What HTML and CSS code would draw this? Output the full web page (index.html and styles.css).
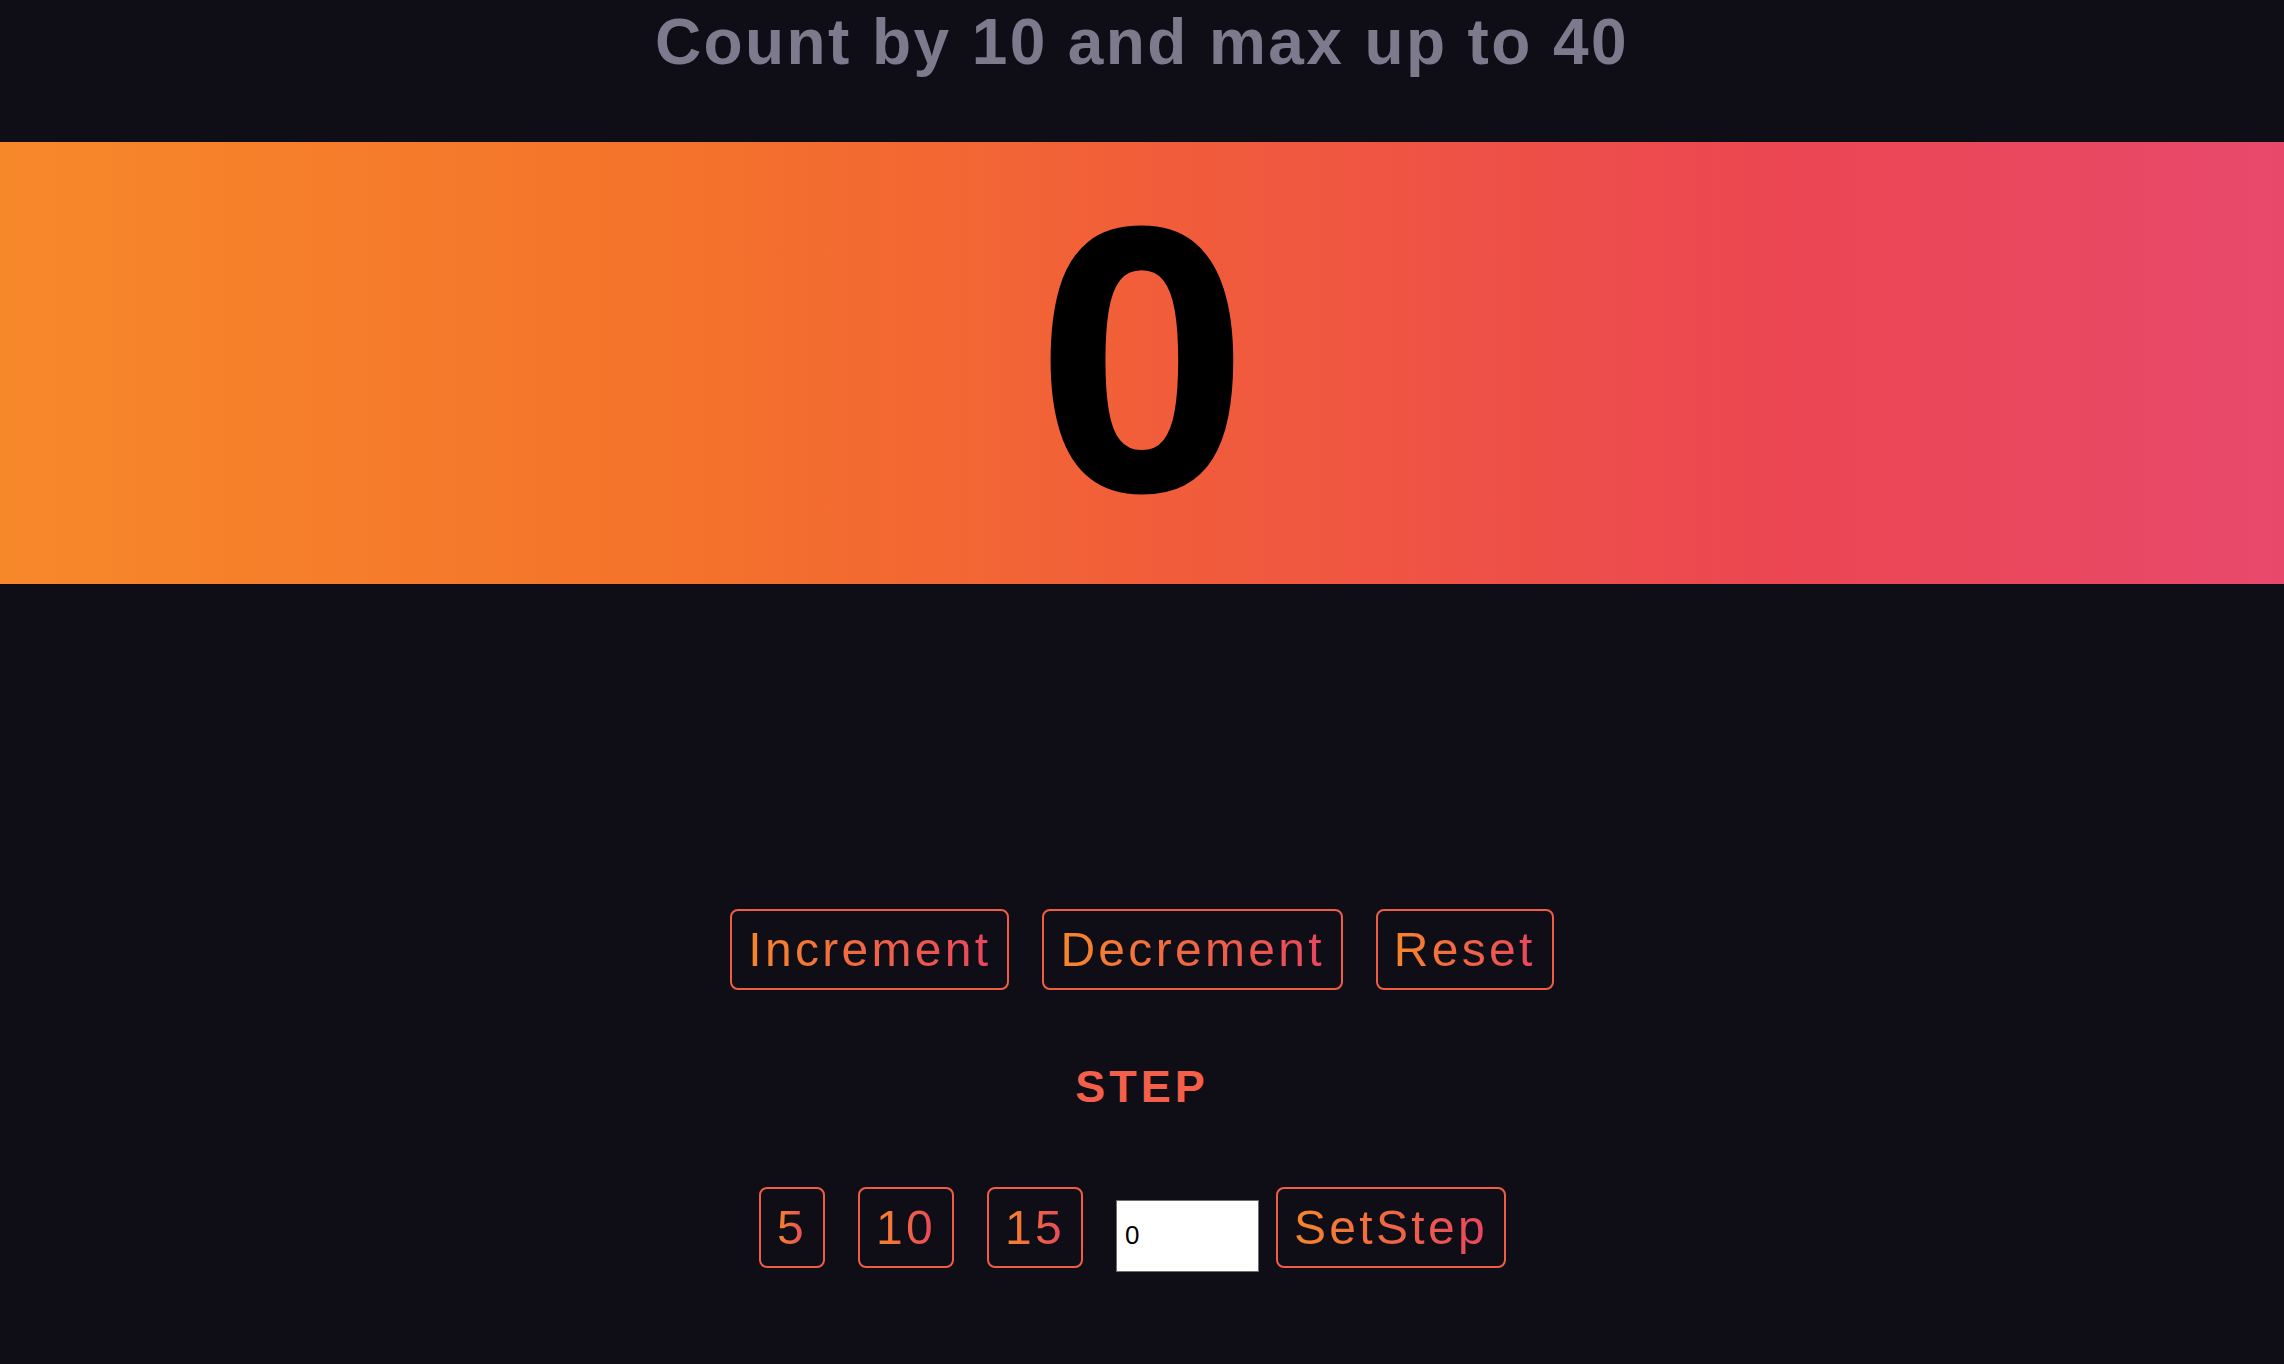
FILE: index.html
```html
<!DOCTYPE html>
<html lang="en">
<head>
<meta charset="utf-8">
<title>Counter</title>
<link rel="stylesheet" href="styles.css">
</head>
<body>
<main class="app">
  <h1 class="title">Count by 10 and max up to 40</h1>
  <section class="display">
    <span class="count">0</span>
  </section>
  <div class="controls">
    <button class="btn"><span class="grad">Increment</span></button>
    <button class="btn"><span class="grad">Decrement</span></button>
    <button class="btn"><span class="grad">Reset</span></button>
  </div>
  <h2 class="step-label">STEP</h2>
  <div class="step-row">
    <button class="btn"><span class="grad">5</span></button>
    <button class="btn"><span class="grad">10</span></button>
    <button class="btn"><span class="grad">15</span></button>
    <input class="step-input" type="text" value="0">
    <button class="btn btn-set"><span class="grad">SetStep</span></button>
  </div>
</main>
</body>
</html>
```
FILE: styles.css
```css
html, body {
  margin: 0;
  padding: 0;
  background: #0f0e17;
}

body {
  font-family: "Liberation Sans", Arial, sans-serif;
}

.app {
  display: flex;
  flex-direction: column;
  align-items: center;
  padding-top: 5px;
}

.title {
  margin: 0;
  font-size: 64px;
  font-weight: 700;
  letter-spacing: 2.4px;
  color: #7c7a8c;
  line-height: normal;
}

.display {
  box-sizing: border-box;
  align-self: stretch;
  margin-top: 63px;
  height: 442px;
  padding-bottom: 28px;
  display: flex;
  align-items: center;
  justify-content: center;
  background: linear-gradient(to right, #f7882a 0%, #f4722b 30%, #f15c3b 52%, #eb4652 78%, #e8496b 100%);
}

.count {
  font-family: "Open Sans", "Noto Sans", sans-serif;
  font-weight: 700;
  font-size: 366px;
  line-height: 1;
  color: #000;
}

.controls {
  display: flex;
  align-items: baseline;
  gap: 33px;
  margin-top: 325px;
}

.btn {
  font-family: "Liberation Sans", Arial, sans-serif;
  font-size: 48px;
  line-height: normal;
  letter-spacing: 3.3px;
  padding: 11px 16px;
  border: 2px solid #f15d44;
  border-radius: 8px;
  background: transparent;
  cursor: pointer;
  margin: 0;
}

.grad {
  background: linear-gradient(to right, #f7862a, #e8465f);
  -webkit-background-clip: text;
  background-clip: text;
  color: transparent;
}

.step-label {
  margin: 71px 0 0;
  font-size: 45px;
  font-weight: 700;
  letter-spacing: 4px;
  color: #f45f49;
  line-height: normal;
}

.step-row {
  display: flex;
  align-items: baseline;
  gap: 33px;
  margin-top: 74px;
  padding-right: 19px;
}

.step-input {
  box-sizing: border-box;
  width: 143px;
  height: 72px;
  padding: 0 8px;
  border: 1px solid #6e6e6e;
  background: #fff;
  color: #000;
  font-family: "Liberation Sans", Arial, sans-serif;
  font-size: 26px;
  margin-right: -16px;
}
```
